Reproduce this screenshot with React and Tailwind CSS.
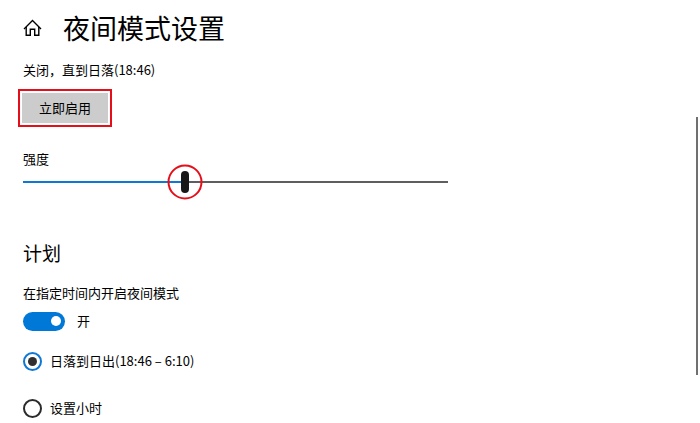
import React, { useState } from 'react';

const THUMB_WIDTH = 8;

const HomeIcon = () => (
  <svg viewBox="0 0 20 20" className="h-5 w-5" fill="none" stroke="currentColor" strokeWidth="1.4">
    <path d="M1 10.9 9.5 2.6l8.5 8.3" />
    <path d="M3.2 9v8.3h4.1v-6h4.4v6h4.1V9" />
  </svg>
);

const StrengthSlider = () => {
  const [strength, setStrength] = useState(38);

  const thumbCenter = `calc(${strength}% + ${THUMB_WIDTH / 2 - (strength * THUMB_WIDTH) / 100}px)`;

  return (
    <div className="mt-[22px]">
      <label htmlFor="strength" className="block leading-5">强度</label>
      <div className="relative flex h-[26px] w-full max-w-[425px] items-center">
        <div className="flex h-[2px] w-full bg-[#5e5e5e]">
          <div className="bg-[#0f78d4]" style={{ width: thumbCenter }} />
        </div>
        <input
          id="strength"
          type="range"
          min="0"
          max="100"
          value={strength}
          onChange={(e) => setStrength(Number(e.target.value))}
          className="absolute inset-0 m-0 w-full cursor-pointer appearance-none bg-transparent [&::-webkit-slider-thumb]:h-[22px] [&::-webkit-slider-thumb]:w-[8px] [&::-webkit-slider-thumb]:appearance-none [&::-webkit-slider-thumb]:rounded-full [&::-webkit-slider-thumb]:bg-[#171717]"
        />
        <span
          className="pointer-events-none absolute top-1/2 h-[35px] w-[35px] -translate-x-1/2 -translate-y-1/2 rounded-full border-2 border-[#e60f19]"
          style={{ left: thumbCenter }}
        />
      </div>
    </div>
  );
};

const ScheduleOption = ({ value, label, selected, onSelect }) => (
  <label className="flex items-center gap-2 leading-5">
    <input
      type="radio"
      name="schedule"
      value={value}
      checked={selected === value}
      onChange={() => onSelect(value)}
      className="grid h-[19px] w-[19px] appearance-none place-items-center rounded-full border-2 border-[#2b2b2b] before:h-[9px] before:w-[9px] before:rounded-full checked:border-[#0f78d4] checked:before:bg-[#2f2f2f]"
    />
    {label}
  </label>
);

const App = () => {
  const [enabled, setEnabled] = useState(true);
  const [schedule, setSchedule] = useState('sunset');

  return (
    <div className="flex justify-between bg-white font-['Noto_Sans_CJK_SC','Noto_Sans',sans-serif] text-[13px] text-black">
      <main className="min-w-0 flex-1 pt-2 pl-[23px]">
        <header className="flex items-center gap-5">
          <a href="#home" aria-label="主页"><HomeIcon /></a>
          <h1 className="text-[27px] leading-10">夜间模式设置</h1>
        </header>

        <p className="mt-3 leading-5">关闭，直到日落(18:46)</p>
        <div className="mt-[9px] -ml-[5px] flex w-fit border-2 border-[#e60f19] p-[2px]">
          <button type="button" className="h-[30px] w-[86px] bg-[#cccccc]">立即启用</button>
        </div>

        <StrengthSlider />

        <h2 className="mt-11 text-[19px] leading-7">计划</h2>
        <p className="mt-4 leading-5">在指定时间内开启夜间模式</p>
        <label className="mt-2 flex items-center gap-3 leading-5">
          <input
            type="checkbox"
            role="switch"
            aria-label="在指定时间内开启夜间模式"
            checked={enabled}
            onChange={(e) => setEnabled(e.target.checked)}
            className="flex h-[19px] w-[42px] appearance-none items-center rounded-full bg-[#767676] px-1 before:h-[10px] before:w-[10px] before:rounded-full before:bg-white checked:justify-end checked:bg-[#0078d7]"
          />
          {enabled ? '开' : '关'}
        </label>

        <div className="mt-5 flex flex-col gap-[27px]">
          <ScheduleOption value="sunset" label="日落到日出(18:46 – 6:10)" selected={schedule} onSelect={setSchedule} />
          <ScheduleOption value="hours" label="设置小时" selected={schedule} onSelect={setSchedule} />
        </div>
      </main>

      {/* Scroll indicator */}
      <div className="mt-[117px] mr-[2px] h-[258px] w-[2px] bg-[#707070]" />
    </div>
  );
};

export default App;
